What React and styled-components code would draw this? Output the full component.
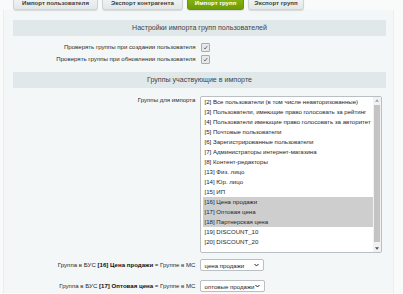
import React from "react";
import styled, { createGlobalStyle } from "styled-components";

const GlobalStyle = createGlobalStyle`
  html, body { margin: 0; padding: 0; }
  body {
    background: #f9fbfb;
    font-family: "Liberation Sans", Arial, sans-serif;
    color: #222;
    overflow: hidden;
  }
`;

const Page = styled.div`
  width: 391px;
  height: 294px;
  padding-left: 3px;
  overflow: hidden;
`;

const TabBar = styled.div`
  display: flex;
  gap: 4px;
  padding-left: 10px;
  margin-top: -4px;
  height: 14px;
`;

const Tab = styled.div`
  height: 13px;
  padding: 0 ${(p) => p.$pad || 7}px;
  display: flex;
  align-items: center;
  font-size: 6.1px;
  font-weight: bold;
  border-radius: 0 0 3px 3px;
  white-space: nowrap;
  color: ${(p) => (p.$active ? "#fff" : "#3a3f41")};
  background: ${(p) =>
    p.$active
      ? "linear-gradient(#8dbb15, #6c9c05)"
      : "linear-gradient(#f4f6f6, #e2e7e8)"};
  border: 1px solid ${(p) => (p.$active ? "#6b9408" : "#cdd4d6")};
  border-top: none;
  box-shadow: 0 1px 1px rgba(0, 0, 0, 0.12);
`;

const Panel = styled.div`
  background: #f3f7f7;
  border-left: 1px solid #e9eeef;
  border-right: 1px solid #e9eeef;
  padding: 10px 7px 1px 9px;
`;

const SectionHead = styled.div`
  height: 16px;
  background: #e0e8ea;
  display: flex;
  align-items: center;
  justify-content: center;
  font-size: 7.1px;
  color: #3f4548;
  margin-top: ${(p) => p.$top || 0}px;
`;

const FormGrid = styled.div`
  display: grid;
  grid-template-columns: 1fr 1fr;
  row-gap: ${(p) => p.$gap || 0}px;
  margin-top: ${(p) => p.$top || 0}px;
  align-items: ${(p) => (p.$start ? "start" : "center")};
`;

const Label = styled.div`
  text-align: right;
  padding-right: 4px;
  font-size: 6.1px;
  color: #2a2a2a;
  line-height: ${(p) => p.$lh || 12}px;
  white-space: nowrap;
  b { font-weight: bold; color: #111; }
`;

const Control = styled.div`
  display: flex;
  align-items: center;
`;

const Check = styled.div`
  width: 7px;
  height: 7px;
  border: 1px solid #a9adb0;
  border-radius: 1px;
  background: #e6e9ea;
  margin-left: 1px;
  display: flex;
  align-items: center;
  justify-content: center;
  svg { display: block; }
`;

const ListBox = styled.div`
  width: 180px;
  height: 155px;
  border: 1px solid #b9bfc2;
  border-radius: 2px;
  background: #fff;
  display: flex;
  overflow: hidden;
`;

const Items = styled.div`
  flex: 1;
  padding: 0 0 0 2px;
  overflow: hidden;
`;

const Item = styled.div`
  height: 10px;
  line-height: 10px;
  padding-left: 2px;
  font-size: 6.1px;
  color: #1e1e1e;
  white-space: nowrap;
  background: ${(p) => (p.$sel ? "#cecece" : "transparent")};
`;

const Scroll = styled.div`
  width: 8px;
  display: flex;
  flex-direction: column;
  background: #f1f1f1;
`;

const ScrollBtn = styled.div`
  height: 7px;
  display: flex;
  align-items: center;
  justify-content: center;
  svg { display: block; }
`;

const Track = styled.div`
  flex: 1;
  padding: 1px 0 3px;
  display: flex;
`;

const Thumb = styled.div`
  flex: 1;
  background: #c4c4c4;
  margin: 0 1px;
`;

const Select = styled.div`
  width: ${(p) => p.$w}px;
  height: 12px;
  box-sizing: border-box;
  border: 1px solid #b9bfc2;
  border-radius: 2px;
  background: #fff;
  display: flex;
  align-items: center;
  justify-content: space-between;
  padding: 0 4px;
  font-size: 6.1px;
  color: #222;
  white-space: nowrap;
  svg { display: block; }
`;

const groups = [
  ["[2] Все пользователи (в том числе неавторизованные)"],
  ["[3] Пользователи, имеющие право голосовать за рейтинг"],
  ["[4] Пользователи имеющие право голосовать за авторитет"],
  ["[5] Почтовые пользователи"],
  ["[6] Зарегистрированные пользователи"],
  ["[7] Администраторы интернет-магазина"],
  ["[8] Контент-редакторы"],
  ["[13] Физ. лицо"],
  ["[14] Юр. лицо"],
  ["[15] ИП"],
  ["[16] Цена продажи", true],
  ["[17] Оптовая цена", true],
  ["[18] Партнерская цена", true],
  ["[19] DISCOUNT_10"],
  ["[20] DISCOUNT_20"],
];

const CheckMark = () => (
  <svg width="5" height="5" viewBox="0 0 10 10">
    <path d="M1.5 5.5 L4 8 L8.5 2" fill="none" stroke="#666" strokeWidth="1.8" />
  </svg>
);

const Chevron = () => (
  <svg width="5" height="4" viewBox="0 0 10 7">
    <path d="M1 1.5 L5 5.5 L9 1.5" fill="none" stroke="#222" strokeWidth="2" />
  </svg>
);

const Arrow = ({ down }) => (
  <svg width="4" height="3" viewBox="0 0 8 5">
    <path d={down ? "M0 0 L8 0 L4 5 Z" : "M0 5 L8 5 L4 0 Z"} fill={down ? "#505050" : "#a3a3a3"} />
  </svg>
);

export default function App() {
  return (
    <>
      <GlobalStyle />
      <Page>
        <TabBar>
          <Tab $pad={8}>Импорт пользователя</Tab>
          <Tab $pad={8}>Экспорт контрагента</Tab>
          <Tab $active $pad={7}>Импорт групп</Tab>
          <Tab $pad={5}>Экспорт групп</Tab>
        </TabBar>
        <Panel>
          <SectionHead>Настройки импорта групп пользователей</SectionHead>
          <FormGrid $top={5}>
            <Label>Проверять группы при создании пользователя</Label>
            <Control>
              <Check><CheckMark /></Check>
            </Control>
            <Label>Проверять группы при обновлении пользователя</Label>
            <Control>
              <Check><CheckMark /></Check>
            </Control>
          </FormGrid>
          <SectionHead $top={7}>Группы участвующие в импорте</SectionHead>
          <FormGrid $top={8} $start>
            <Label $lh={8}>Группы для импорта</Label>
            <Control>
              <ListBox>
                <Items>
                  {groups.map(([name, sel]) => (
                    <Item key={name} $sel={sel}>{name}</Item>
                  ))}
                </Items>
                <Scroll>
                  <ScrollBtn><Arrow /></ScrollBtn>
                  <Track><Thumb /></Track>
                  <ScrollBtn><Arrow down /></ScrollBtn>
                </Scroll>
              </ListBox>
            </Control>
          </FormGrid>
          <FormGrid $top={6} $gap={9}>
            <Label>
              Группа в БУС <b>[16] Цена продажи</b> = Группе в МС
            </Label>
            <Control>
              <Select $w={64}>
                <span>цена продажи</span>
                <Chevron />
              </Select>
            </Control>
            <Label>
              Группа в БУС <b>[17] Оптовая цена</b> = Группе в МС
            </Label>
            <Control>
              <Select $w={65}>
                <span>оптовые продажи</span>
                <Chevron />
              </Select>
            </Control>
          </FormGrid>
        </Panel>
      </Page>
    </>
  );
}
